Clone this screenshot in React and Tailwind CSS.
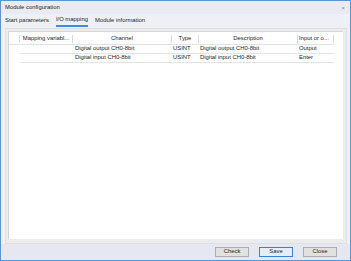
import React from 'react';

const cols = [
  { key: 'rh', w: 'w-[11px]', label: '', left: false },
  { key: 'map', w: 'w-[53px]', label: 'Mapping variabl...', left: false },
  { key: 'ch', w: 'w-[99px]', label: 'Channel', left: false },
  { key: 'type', w: 'w-[27px]', label: 'Type', left: false },
  { key: 'desc', w: 'w-[99px]', label: 'Description', left: false },
  { key: 'io', w: 'w-[36px]', label: 'Input or o...', left: true },
];

const rows = [
  { map: '', ch: 'Digital output CH0-8bit', type: 'USINT', desc: 'Digital output CH0-8bit', io: 'Output' },
  { map: '', ch: 'Digital input CH0-8bit', type: 'USINT', desc: 'Digital input CH0-8bit', io: 'Enter' },
];

export default function App() {
  return (
    <div className="w-[351px] h-[261px] flex flex-col border border-[#5e95cf] bg-[#eef0f6] text-[5.9px] leading-none text-[#1e1e1e] font-['Liberation_Sans','Noto_Sans',sans-serif] overflow-hidden">
      {/* title bar */}
      <div className="h-[13px] flex items-center justify-between pl-[4px] pr-[5px] bg-[#e8ebf4]">
        <span>Module configuration</span>
        <span className="text-[6px] text-[#888]">×</span>
      </div>

      {/* tabs */}
      <div className="h-[13px] flex items-stretch gap-[7px] pl-[4px]">
        <div className="flex items-center pt-[1px]">Start parameters</div>
        <div className="flex items-center pt-[1px] border-b-[2px] border-[#3d8ee0]">I/O mapping</div>
        <div className="flex items-center pt-[1px]">Module information</div>
      </div>

      {/* content panel */}
      <div className="flex-1 ml-[4px] mr-[3px] mt-[1px] pl-[2px] pr-[3px] pt-[2px] pb-[4px] bg-[#ececec] border border-[#e0e0e0] flex">
        <div className="flex-1 bg-white border-l border-t border-[#d6d6d6] pt-[2px]">
          <div className="w-[325px]">
            <div className="h-[11px] flex border-b border-[#e2e2e2]">
              {cols.map((c) => (
                <div
                  key={c.key}
                  className={`${c.w} shrink-0 flex items-center ${c.left ? 'justify-start pl-[1px]' : 'justify-center'} border-r border-[#d9d9d9] my-[1px] whitespace-nowrap overflow-hidden`}
                >
                  {c.label}
                </div>
              ))}
            </div>
            {rows.map((r, i) => (
              <div key={i} className="h-[9px] flex">
                <div className="w-[11px] shrink-0" />
                <div className="flex flex-1 border-b border-[#e4e4e4]">
                  <div className="w-[53px] shrink-0">{r.map}</div>
                  <div className="w-[99px] shrink-0 flex items-center pl-[2px] whitespace-nowrap">{r.ch}</div>
                  <div className="w-[27px] shrink-0 flex items-center pl-[1px] whitespace-nowrap">{r.type}</div>
                  <div className="w-[99px] shrink-0 flex items-center pl-[1px] whitespace-nowrap">{r.desc}</div>
                  <div className="w-[36px] shrink-0 flex items-center pl-[1px] whitespace-nowrap">{r.io}</div>
                </div>
              </div>
            ))}
          </div>
        </div>
      </div>

      {/* footer */}
      <div className="h-[16px] flex items-center justify-end gap-[10px] pr-[13px] bg-[#e5e8f2]">
        <button className="w-[34px] h-[10px] bg-[#e1e1e1] border border-[#adadad] flex items-center justify-center">Check</button>
        <button className="w-[34px] h-[10px] bg-[#e5edf7] border border-[#3c7fd6] flex items-center justify-center">Save</button>
        <button className="w-[34px] h-[10px] bg-[#e1e1e1] border border-[#adadad] flex items-center justify-center">Close</button>
      </div>
    </div>
  );
}
